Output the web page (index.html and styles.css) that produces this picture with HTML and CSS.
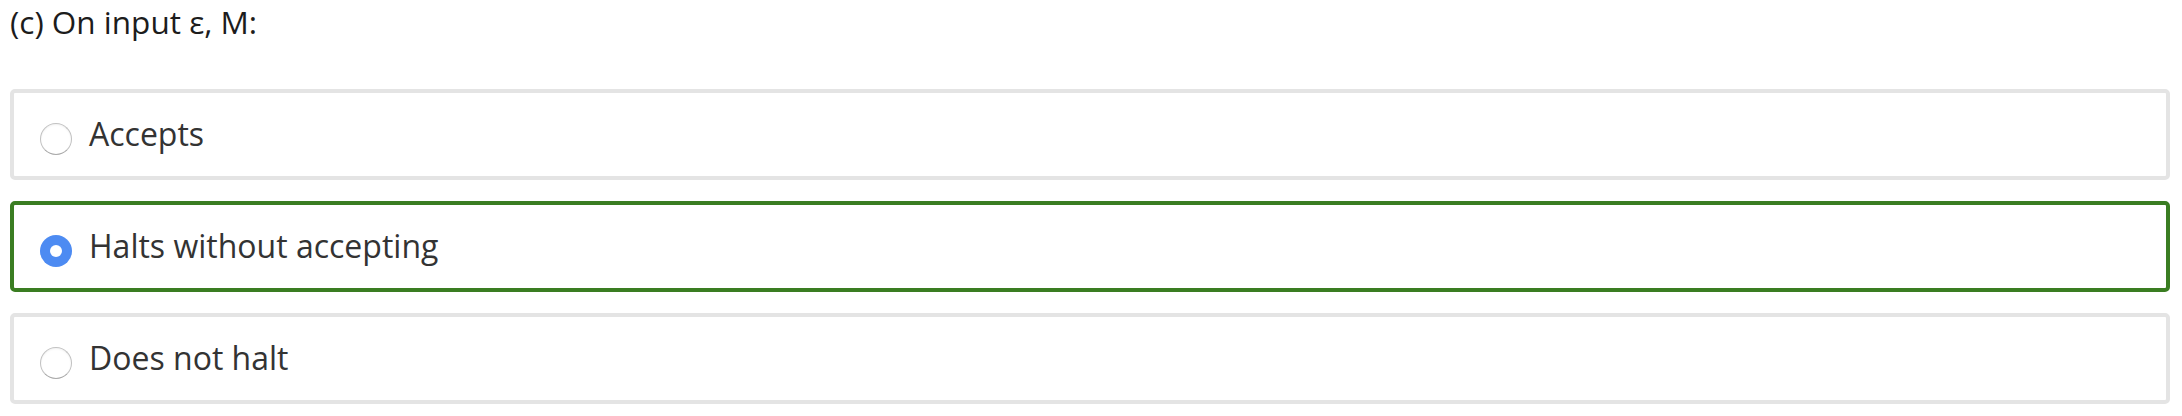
FILE: index.html
```html
<!DOCTYPE html>
<html>
<head>
<meta charset="utf-8">
<link rel="stylesheet" href="styles.css">
</head>
<body>
  <div class="question">
    <div class="prompt">(c) On input ε, M:</div>
    <div class="options">
      <label class="option">
        <span class="radio"></span>
        <span class="label-text">Accepts</span>
      </label>
      <label class="option option--selected">
        <span class="radio radio--checked"></span>
        <span class="label-text">Halts without accepting</span>
      </label>
      <label class="option">
        <span class="radio"></span>
        <span class="label-text">Does not halt</span>
      </label>
    </div>
  </div>
</body>
</html>
```

FILE: styles.css
```css
html, body {
  margin: 0;
  padding: 0;
  background: #ffffff;
}

body {
  font-family: "Open Sans", "Liberation Sans", sans-serif;
  padding: 1px 12px 0 10px;
}

.prompt {
  font-size: 31.5px;
  line-height: 42px;
  color: #1c1c1c;
  padding-left: 0;
}

.options {
  margin-top: 46px;
  display: flex;
  flex-direction: column;
  gap: 21px;
}

.option {
  display: flex;
  align-items: flex-start;
  border: 4px solid #e4e4e4;
  border-radius: 5px;
  padding: 19px 20px 20px 26px;
  height: 44px;
}

.option--selected {
  border-color: #3a7d22;
}

.radio {
  box-sizing: border-box;
  flex: none;
  width: 32px;
  height: 32px;
  margin-top: 11px;
  border-radius: 50%;
  border: 1.5px solid #c2c2c2;
  border-bottom-color: #a9a9a9;
  background: #ffffff;
  box-shadow: inset 0 1px 2px rgba(0, 0, 0, 0.06);
  position: relative;
}

.radio--checked {
  border: none;
  background: #4d8bf2;
  box-shadow: none;
}

.radio--checked::after {
  content: "";
  position: absolute;
  left: 10px;
  top: 10px;
  width: 12px;
  height: 12px;
  border-radius: 50%;
  background: #ffffff;
}

.label-text {
  margin-left: 17px;
  font-size: 32px;
  line-height: 44px;
  color: #333333;
}
```
